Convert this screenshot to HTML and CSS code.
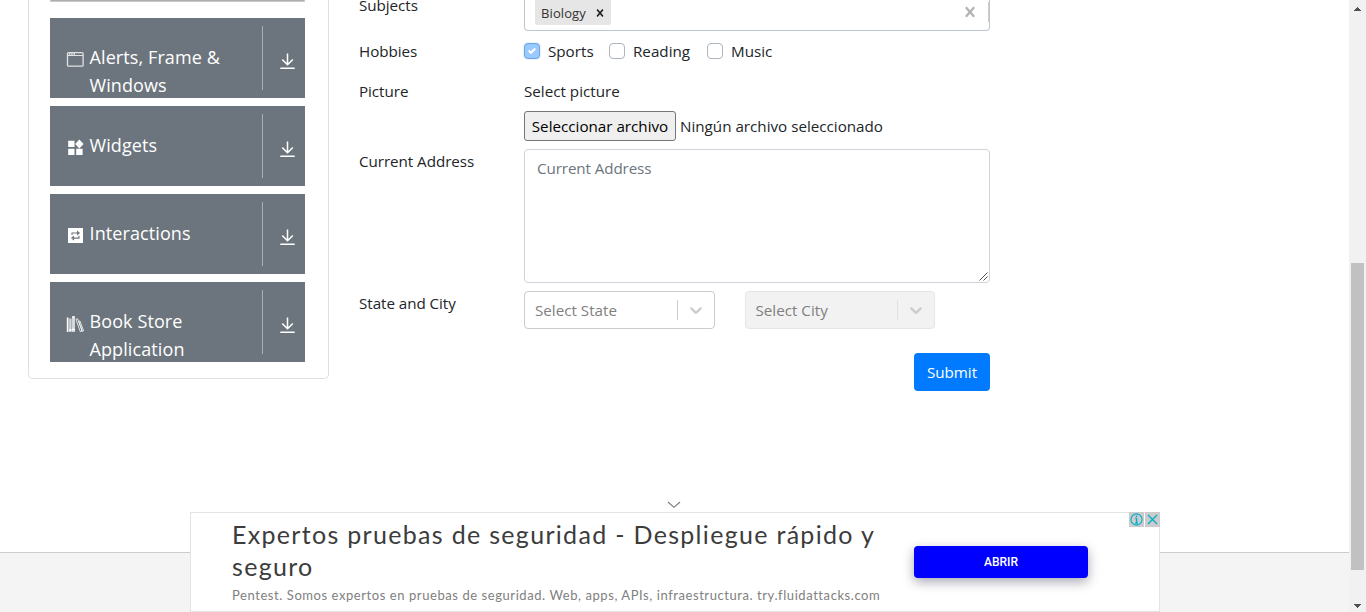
FILE: index.html
```html
<!DOCTYPE html>
<html lang="en">
<head>
<meta charset="utf-8">
<title>Practice Form</title>
<link rel="stylesheet" href="styles.css">
</head>
<body>
<svg class="defs" width="0" height="0">
  <symbol id="expand" viewBox="0 0 16 18"><path d="M7.5 1.5v11M2.2 7.5l5.3 5.3 5.3-5.3M.3 16.2h14.4" fill="none" stroke="currentColor" stroke-width="1.5"/></symbol>
  <symbol id="chevron" viewBox="0 0 20 20"><path d="M4.516 7.548c0.436-0.446 1.043-0.481 1.576 0l3.908 3.747 3.908-3.747c0.533-0.481 1.141-0.446 1.574 0 0.436 0.445 0.408 1.197 0 1.615-0.406 0.418-4.695 4.502-4.695 4.502-0.217 0.223-0.502 0.335-0.787 0.335s-0.57-0.112-0.789-0.335c0 0-4.287-4.084-4.695-4.502s-0.436-1.17 0-1.615z" fill="currentColor"/></symbol>
  <symbol id="cross" viewBox="0 0 20 20"><path d="M14.348 14.849c-0.469 0.469-1.229 0.469-1.697 0l-2.651-3.030-2.651 3.029c-0.469 0.469-1.229 0.469-1.697 0-0.469-0.469-0.469-1.229 0-1.697l2.758-3.15-2.759-3.152c-0.469-0.469-0.469-1.228 0-1.697s1.228-0.469 1.697 0l2.652 3.031 2.651-3.031c0.469-0.469 1.228-0.469 1.697 0s0.469 1.229 0 1.697l-2.758 3.152 2.758 3.15c0.469 0.469 0.469 1.229 0 1.698z" fill="currentColor"/></symbol>
</svg>
<div class="window">
  <div class="page">
    <div class="content">
      <nav class="sidebar">
        <div class="strip"></div>
        <div class="group">
          <svg class="group-icon" width="18" height="18" viewBox="0 0 18 18"><rect x="1.5" y="2.6" width="15.6" height="13.6" rx="1" fill="none" stroke="#dfe1e3" stroke-width="1.3"/><path d="M1.5 5.5h15.6" stroke="#dfe1e3" stroke-width="1"/><path d="M3 4h6" stroke="#fff" stroke-width="1.5" stroke-dasharray="1.3 1"/></svg>
          <span class="group-text">Alerts, Frame &amp; Windows</span>
          <span class="toggle"><svg width="16" height="18"><use href="#expand"/></svg></span>
        </div>
        <div class="group">
          <svg class="group-icon" width="18" height="18" viewBox="0 0 18 18"><path d="M2.2 2.8h6.3v6.3H2.2zM2.2 10.7h6.3v6.2H2.2zM10.2 10.7h6.4v6.2h-6.4zM13.3 1.6l4.3 4.5-4.3 4.3-4.1-4.3z" fill="#fff"/></svg>
          <span class="group-text">Widgets</span>
          <span class="toggle"><svg width="16" height="18"><use href="#expand"/></svg></span>
        </div>
        <div class="group">
          <svg class="group-icon" width="18" height="18" viewBox="0 0 18 18"><rect x="2" y="2" width="15" height="15" fill="#fff"/><path d="M6 9V7h5.5V5.6L13.2 7l-1.7 1.4V7M13 9.7v2.4H7.5v-1.4l-1.7 1.4 1.7 1.4v-1.4" fill="none" stroke="#6c757d" stroke-width="1.1"/></svg>
          <span class="group-text">Interactions</span>
          <span class="toggle"><svg width="16" height="18"><use href="#expand"/></svg></span>
        </div>
        <div class="group">
          <svg class="group-icon" width="18" height="18" viewBox="0 0 18 18"><path d="M.8 3.5h1.7V18H.8z" fill="#fff"/><path d="M3.2 4.5h2.4V18H3.2zM6 2.5h3V18H6z" fill="#d5d8da"/><path d="M3 16h2.5M6 15.5h3M6.2 3h2.5" stroke="#fff" stroke-width="1.3"/><path d="M9.9 5.3l1.8-.5 4.3 12.2-1.7.6zM12.7 7.5l1.2-.6L17.6 16.8l-1.1.7z" fill="none" stroke="#fff" stroke-width=".8"/></svg>
          <span class="group-text">Book Store Application</span>
          <span class="toggle"><svg width="16" height="18"><use href="#expand"/></svg></span>
        </div>
      </nav>
      <form class="form">
        <div class="row subjects">
          <span class="label">Subjects</span>
          <div class="multi">
            <span class="tag"><span class="tag-text">Biology</span><svg width="14" height="14"><use href="#cross"/></svg></span>
            <svg class="clear" width="20" height="20"><use href="#cross"/></svg>
            <span class="bar"></span>
          </div>
        </div>
        <div class="row hobbies">
          <span class="label">Hobbies</span>
          <div class="checks">
            <span class="check sports"><span class="box on"><svg width="8" height="8" viewBox="0 0 8 8"><path d="M6.564.75l-3.59 3.612-1.538-1.55L0 4.26 2.974 7.25 8 2.193z" fill="#fff"/></svg></span>Sports</span>
            <span class="check reading"><span class="box"></span>Reading</span>
            <span class="check"><span class="box"></span>Music</span>
          </div>
        </div>
        <div class="row picture">
          <span class="label">Picture</span>
          <div class="file">
            <span>Select picture</span>
            <div class="file-line"><span class="file-button">Seleccionar archivo</span><span class="file-name">Ningún archivo seleccionado</span></div>
          </div>
        </div>
        <div class="row address">
          <span class="label">Current Address</span>
          <div class="area"><span>Current Address</span><svg class="grip" width="9" height="9" viewBox="0 0 9 9"><path d="M.5 8.5l8-8M4.5 8.5l4-4" stroke="#555" stroke-width="1"/></svg></div>
        </div>
        <div class="row place">
          <span class="label">State and City</span>
          <div class="selects">
            <div class="select"><span class="hint">Select State</span><span class="sep"></span><svg width="20" height="20"><use href="#chevron"/></svg></div>
            <div class="select off"><span class="hint">Select City</span><span class="sep"></span><svg width="20" height="20"><use href="#chevron"/></svg></div>
          </div>
        </div>
        <div class="actions"><span class="submit">Submit</span></div>
      </form>
    </div>
    <footer class="footer"></footer>
    <aside class="ad">
      <svg class="collapse" width="14" height="8" viewBox="0 0 14 8"><path d="M1 1l6 5.3L13 1" fill="none" stroke="#777" stroke-width="1.1"/></svg>
      <div class="ad-copy">
        <div class="ad-title"><span class="title-one">Expertos pruebas de seguridad - Despliegue rápido y</span><br>seguro</div>
        <div class="ad-text">Pentest. Somos expertos en pruebas de seguridad. Web, apps, APIs, infraestructura. try.fluidattacks.com</div>
      </div>
      <span class="ad-button">ABRIR</span>
      <div class="ad-tools">
        <svg width="15" height="15" viewBox="0 0 15 15"><path d="M0 0h15v15H0z" fill="#ccc"/><circle cx="7.5" cy="7.5" r="5.6" fill="none" stroke="#00aecd" stroke-width="1.1"/><path d="M7.5 3.6v1.5M6.3 6.5h1.3v4.4M6.2 11h2.7" fill="none" stroke="#00aecd" stroke-width="1.3"/></svg>
        <svg width="15" height="15" viewBox="0 0 15 15"><path d="M0 0h15v15H0z" fill="#ccc"/><path d="M3 3l9 9M12 3l-9 9" stroke="#00aecd" stroke-width="1.3"/></svg>
      </div>
    </aside>
  </div>
  <div class="scrollbar">
    <svg width="7" height="4" viewBox="0 0 7 4"><path d="M0 4V3h1V2h1V1h1V0h1v1h1v1h1v1h1v1z" fill="#505050"/></svg>
    <span class="thumb"></span>
    <svg width="7" height="4" viewBox="0 0 7 4"><path d="M0 0v1h1v1h1v1h1v1h1V3h1V2h1V1h1V0z" fill="#505050"/></svg>
  </div>
</div>
</body>
</html>
```
FILE: styles.css
```css
* { box-sizing: border-box; }
body { margin: 0; overflow: hidden; background: #fff; color: #212529; font: 15.2px/24px "Open Sans", "Noto Sans", sans-serif; }
svg { display: block; flex: none; }
.defs { position: absolute; }
.window { display: flex; width: 1366px; height: 612px; overflow: hidden; }
.page { position: relative; display: flex; flex-direction: column; width: 1349px; }
.content { display: flex; align-items: flex-start; gap: 30px; height: 552px; padding-left: 28px; }
.footer { flex: 1; border-top: 1px solid #ccc; background: #f4f4f4; }

.sidebar { display: flex; flex-direction: column; gap: 8px; width: 301px; height: 379px; padding: 0 23px 16px 21px; border: 1px solid #dfdfdf; border-top: 0; border-radius: 0 0 5px 5px; }
.strip { height: 2px; margin-bottom: 8px; background: #adadad; border: 1px solid #ccc; border-top: 0; }
.group { display: flex; width: 255px; height: 80px; padding: 8px 0 0 16px; background: #6c757d; color: #fff; font-size: 18px; line-height: 28px; overflow: hidden; }
.group-icon { margin: 24px 5px 0 0; }
.group-text { width: 173px; padding: 17px 25px 0 .5px; letter-spacing: .1px; }
.toggle { width: 43px; height: 64px; padding: 26px 0 0 17px; border-left: 1px solid #adadad; }

.form { width: 631px; height: 391px; }
.row { display: flex; }
.label { width: 165px; flex: none; margin-top: -1px; letter-spacing: -.05px; }
.subjects { height: 40px; }
.subjects .label { margin-top: -7px; }
.multi { display: flex; align-items: flex-start; width: 466px; height: 31px; padding-left: 10px; border: 1px solid #bfc5d0; border-top: 0; border-radius: 0 0 4px 4px; }
.tag { display: flex; align-items: center; gap: 6px; width: 76px; height: 25px; padding: 1px 4px 0 6px; border-radius: 0 0 2px 2px; background: #e6e6e6; color: #333; font-size: 13px; }
.tag-text { width: 46px; letter-spacing: .1px; }
.tag svg { color: #222; margin-top: -1px; }
.clear { margin: 2px 8px 0 349px; color: #b3b3b3; }
.bar { width: 1px; height: 20px; margin: 2px 0 0 0; background: #ccc; }
.hobbies { height: 40px; }
.checks { display: flex; margin-top: -1px; }
.check { display: flex; gap: 8px; }
.sports { width: 85px; }
.reading { width: 98px; }
.box { width: 16px; height: 16px; margin-top: 4px; border: 1px solid #adb5bd; border-radius: 4px; }
.box.on { padding: 3px; border-color: #6fa5df; background: #99c9ff; box-shadow: 0 0 2px #b5d8ff; }
.picture { height: 70px; }
.file { margin-top: -1px; }
.file-line { display: flex; align-items: center; gap: 4px; margin-top: 8px; line-height: 28px; }
.file-button { width: 152px; height: 30px; border: 1px solid #767676; border-radius: 3px; background: #efefef; color: #000; text-align: center; white-space: nowrap; }
.address { height: 141px; }
.area { position: relative; width: 466px; height: 134px; margin-top: -1px; padding: 6px 12px; border: 1px solid #ced4da; border-radius: 4px; color: #6c757d; letter-spacing: -.1px; }
.grip { position: absolute; right: 1px; bottom: 1px; }
.place { height: 62px; }
.place .label { margin-top: 0; }
.selects { display: flex; gap: 30px; }
.select { display: flex; align-items: center; width: 191px; height: 38px; padding: 0 8px 0 10px; border: 1px solid #ccc; border-radius: 4px; color: #ccc; }
.select.off { width: 190px; padding-left: 9.5px; background: #f2f2f2; border-color: #e6e6e6; }
.hint { flex: 1; color: gray; }
.sep { width: 1px; height: 20px; margin-right: 8px; background: #ccc; }
.off .sep { background: #e0e0e0; }
.actions { display: flex; justify-content: flex-end; }
.submit { width: 76px; height: 38px; border-radius: 4px; background: #007bff; color: #fff; text-align: center; line-height: 38px; }

.ad { position: absolute; left: 190px; top: 512px; display: flex; width: 970px; height: 100px; border: 1px solid #e3e3e3; background: #fff; }
.collapse { position: absolute; left: 475.5px; top: -12px; }
.ad-copy { width: 723px; padding: 5px 0 0 41px; white-space: nowrap; }
.ad-title { color: #3c3c3c; font: 25px/32px Lato, sans-serif; letter-spacing: 1.31px; }
.ad-text { margin-top: 5px; color: #808080; font: 13px/17px Lato, sans-serif; letter-spacing: .57px; }
.ad-button { width: 174px; height: 32px; margin-top: 33px; border-radius: 4px; background: #00f; box-shadow: 0 4px 12px rgba(0, 0, 40, .35); color: #fff; font: 500 12px/32px Roboto, sans-serif; text-align: center; }
.ad-tools { position: absolute; right: -1px; top: -1px; display: flex; gap: 1px; }

.scrollbar { display: flex; flex-direction: column; align-items: center; width: 17px; padding: 7px 0 4px; background: #f1f1f1; }
.thumb { width: 13px; height: 307px; margin: 252px 0 auto; background: #c1c1c1; }
```
